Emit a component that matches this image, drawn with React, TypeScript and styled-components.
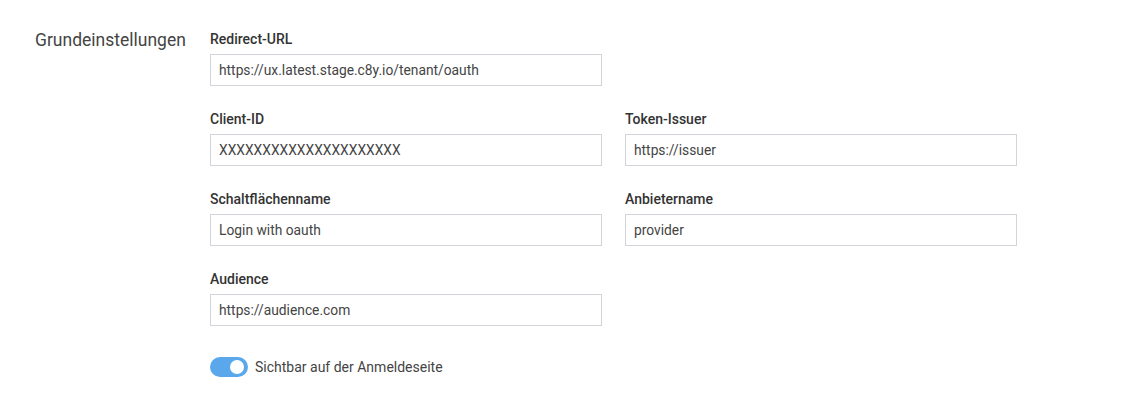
import styled, { createGlobalStyle } from "styled-components";

const GlobalStyle = createGlobalStyle`
    body {
        margin: 0;
        background: #fff;
        font-family: Roboto, "Liberation Sans", sans-serif;
    }
`;

const fields = [
    { label: "Redirect-URL", value: "https://ux.latest.stage.c8y.io/tenant/oauth", full: true },
    { label: "Client-ID", value: "XXXXXXXXXXXXXXXXXXXXX" },
    { label: "Token-Issuer", value: "https://issuer" },
    { label: "Schaltflächenname", value: "Login with oauth" },
    { label: "Anbietername", value: "provider" },
    { label: "Audience", value: "https://audience.com", full: true },
];

export default function App() {
    return (
        <>
            <GlobalStyle />
            <Section>
                <SectionTitle>Grundeinstellungen</SectionTitle>
                <Form>
                    {fields.map((f) => (
                        <Field key={f.label} $full={f.full}>
                            <Label>{f.label}</Label>
                            <Input readOnly value={f.value} />
                        </Field>
                    ))}
                    <ToggleRow>
                        <Switch $on>
                            <Knob />
                        </Switch>
                        <ToggleText>Sichtbar auf der Anmeldeseite</ToggleText>
                    </ToggleRow>
                </Form>
            </Section>
        </>
    );
}

const Section = styled.div`
    display: grid;
    grid-template-columns: 175px 1fr;
    padding: 31px 0 0 35px;
`;

const SectionTitle = styled.h2`
    margin: -1px 0 0;
    font-size: 17.5px;
    line-height: 20px;
    font-weight: 400;
    color: #444;
`;

const Form = styled.div`
    display: grid;
    grid-template-columns: 392px 392px;
    column-gap: 23px;
    row-gap: 25px;
    align-content: start;
`;

const Field = styled.div<{ $full?: boolean }>`
    display: flex;
    flex-direction: column;
    grid-column: ${(p) => (p.$full ? "1 / -1" : "auto")};
    max-width: 392px;
`;

const Label = styled.label`
    font-size: 14px;
    line-height: 16px;
    font-weight: 500;
    color: #333;
    margin-bottom: 7px;
`;

const Input = styled.input`
    box-sizing: border-box;
    width: 100%;
    height: 32px;
    padding: 0 8px;
    border: 1px solid #d1d5da;
    border-radius: 0;
    font-family: Roboto, "Liberation Sans", sans-serif;
    font-size: 13.8px;
    color: #444;
    outline: none;
    background: #fff;
`;

const ToggleRow = styled.div`
    grid-column: 1 / -1;
    display: flex;
    align-items: center;
    gap: 7px;
    margin-top: 6px;
`;

const Switch = styled.span<{ $on?: boolean }>`
    position: relative;
    display: inline-block;
    width: 38px;
    height: 20px;
    border-radius: 10px;
    background: ${(p) => (p.$on ? "#5aa8eb" : "#ccc")};
`;

const Knob = styled.span`
    position: absolute;
    top: 3px;
    right: 4px;
    width: 14px;
    height: 14px;
    border-radius: 50%;
    background: #fff;
`;

const ToggleText = styled.span`
    font-size: 14px;
    color: #444;
`;
